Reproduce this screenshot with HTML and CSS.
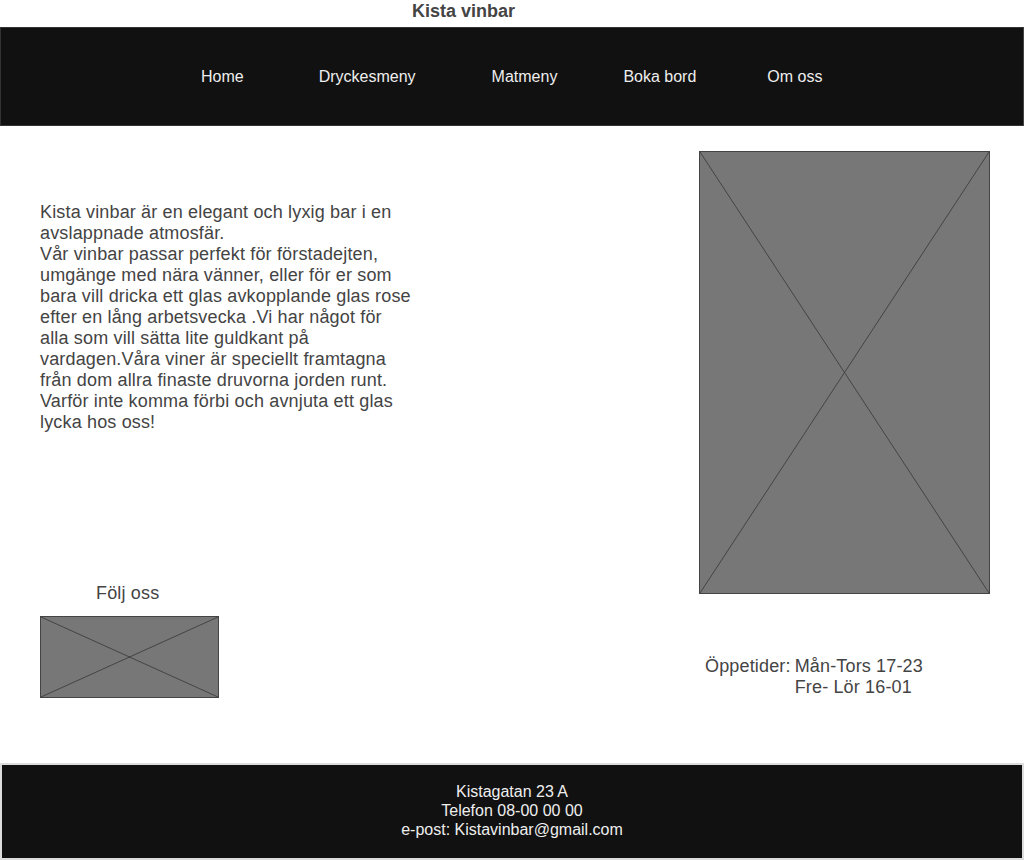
FILE: index.html
```html
<!DOCTYPE html>
<html>
<head>
    <title>Kista vinbar</title>
    <link rel="stylesheet" href="styles.css">
</head>
<body>
    <h1 class="title">Kista vinbar</h1>

    <nav class="topnav">
        <a href="#">Home</a>
        <a href="#">Dryckesmeny</a>
        <a href="#">Matmeny</a>
        <a href="#">Boka bord</a>
        <a href="#">Om oss</a>
    </nav>

    <main class="content">
        <div class="left-col">
            <p class="intro">
                Kista vinbar är en elegant och lyxig bar i en avslappnade atmosfär.<br>
                Vår vinbar passar perfekt för förstadejten, umgänge med nära vänner, eller för er som bara vill dricka ett glas avkopplande glas rose efter en lång arbetsvecka .Vi har något för alla som vill sätta lite guldkant på vardagen.Våra viner är speciellt framtagna från dom allra finaste druvorna jorden runt. Varför inte komma förbi och avnjuta ett glas lycka hos oss!
            </p>
            <div class="follow">Följ oss</div>
            <div class="placeholder small-pic">
                <svg viewBox="0 0 100 100" preserveAspectRatio="none">
                    <line x1="0" y1="0" x2="100" y2="100" />
                    <line x1="100" y1="0" x2="0" y2="100" />
                </svg>
            </div>
        </div>

        <div class="right-col">
            <div class="placeholder big-pic">
                <svg viewBox="0 0 100 100" preserveAspectRatio="none">
                    <line x1="0" y1="0" x2="100" y2="100" />
                    <line x1="100" y1="0" x2="0" y2="100" />
                </svg>
            </div>
            <div class="hours">
                <span class="hours-label">Öppetider:</span>
                <div>
                    Mån-Tors 17-23<br>
                    Fre- Lör 16-01
                </div>
            </div>
        </div>
    </main>

    <footer class="footer">
        Kistagatan 23 A<br>
        Telefon 08-00 00 00<br>
        e-post: Kistavinbar@gmail.com
    </footer>
</body>
</html>
```

FILE: styles.css
```css
body {
    margin: 0;
    font-family: "Liberation Sans", Arial, sans-serif;
    color: #444;
    background-color: white;
}

.title {
    margin: 0 0 5px 0;
    padding-left: 412px;
    font-size: 18px;
    line-height: 22px;
    font-weight: bold;
    color: #444;
}

.topnav {
    display: flex;
    align-items: center;
    height: 97px;
    padding-left: 200px;
    background-color: #111;
    border: 1px solid #333;
    border-right-color: #444;
}

.topnav a {
    color: #eee;
    text-decoration: none;
    font-size: 16px;
    margin-right: 75px;
}

.topnav a:nth-child(2) {
    margin-right: 76px;
}

.topnav a:nth-child(3) {
    margin-right: 66px;
}

.topnav a:nth-child(4) {
    margin-right: 71px;
}

.content {
    display: flex;
    height: 637px;
}

.left-col {
    width: 699px;
    padding-left: 40px;
    box-sizing: border-box;
}

.intro,
.follow,
.hours {
    font-size: 18px;
    line-height: 21px;
    letter-spacing: 0.16px;
}

.intro {
    width: 375px;
    margin: 76px 0 0 0;
}

.follow {
    margin-top: 150px;
    padding-left: 56px;
}

.placeholder {
    background-color: #777;
    border: 1px solid #444;
    box-sizing: border-box;
}

.placeholder svg {
    display: block;
    width: 100%;
    height: 100%;
}

.placeholder line {
    stroke: #444;
    stroke-width: 1;
    vector-effect: non-scaling-stroke;
}

.small-pic {
    width: 179px;
    height: 82px;
    margin-top: 12px;
}

.right-col {
    padding-top: 25px;
}

.big-pic {
    width: 291px;
    height: 443px;
}

.hours {
    display: flex;
    gap: 4px;
    margin-top: 62px;
    padding-left: 6px;
}

.footer {
    border: 2px solid #ddd;
    background-color: #111;
    color: #eee;
    text-align: center;
    font-size: 16px;
    line-height: 19px;
    padding: 17px 0 19px 0;
}
```
